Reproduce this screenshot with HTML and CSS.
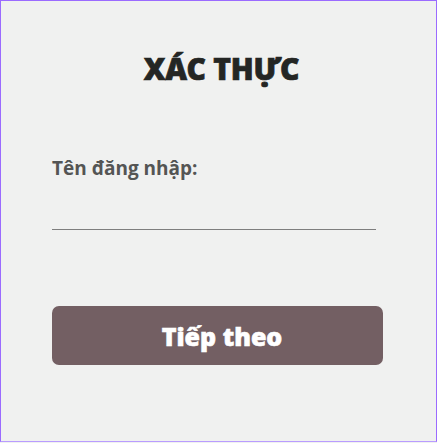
FILE: index.html
```html
<!DOCTYPE html>
<html lang="vi">
<head>
<meta charset="utf-8">
<link rel="stylesheet" href="styles.css">
</head>
<body>
<div class="frame">
  <h1 class="title">XÁC THỰC</h1>
  <form class="form">
    <label class="label" for="user">Tên đăng nhập:</label>
    <input class="input" id="user" type="text">
    <button class="btn" type="button">Tiếp theo</button>
  </form>
</div>
</body>
</html>
```

FILE: styles.css
```css
html, body {
  margin: 0;
  padding: 0;
  height: 100%;
}
body {
  background: #f0f1f0;
}
.frame {
  box-sizing: border-box;
  height: 442px;
  border: 1px solid #9b6bff;
  border-bottom-color: #b99cff;
  padding: 48px 51px 0 51px;
  display: flex;
  flex-direction: column;
}
.title {
  margin: 0;
  padding-left: 6px;
  text-align: center;
  font-family: "Open Sans", "Noto Sans", sans-serif;
  font-weight: 800;
  font-size: 30px;
  line-height: 40px;
  color: #242624;
  letter-spacing: -0.3px;
  -webkit-text-stroke: 0.7px #242624;
}
.form {
  display: flex;
  flex-direction: column;
  margin-top: 67px;
}
.label {
  font-family: "Open Sans", "Noto Sans", sans-serif;
  font-weight: 700;
  font-size: 19px;
  line-height: 24px;
  color: #545554;
}
.input {
  margin-top: 25px;
  width: 324px;
  height: 24px;
  border: 0;
  border-bottom: 1px solid #7e7e7e;
  background: transparent;
  padding: 0;
  outline: none;
}
.btn {
  margin-top: 76px;
  width: 331px;
  height: 59px;
  padding: 0 0 0 9px;
  border: 0;
  border-radius: 7px;
  background: #735f63;
  color: #ffffff;
  font-family: "Open Sans", "Noto Sans", sans-serif;
  font-weight: 800;
  font-size: 25px;
  -webkit-text-stroke: 0.6px #ffffff;
}
```
